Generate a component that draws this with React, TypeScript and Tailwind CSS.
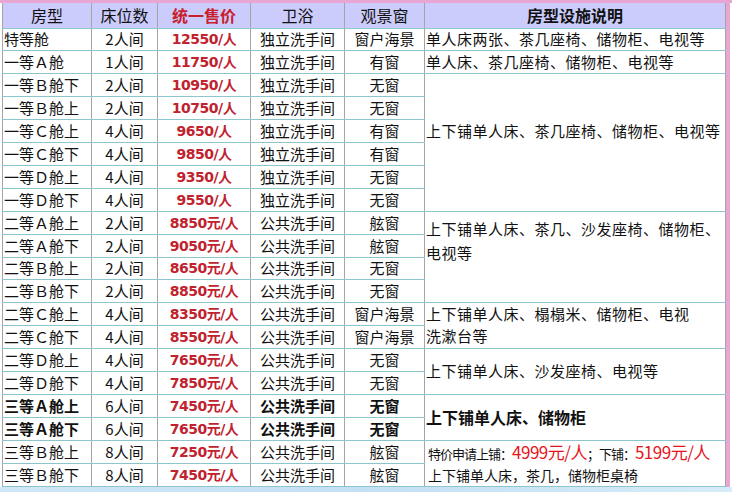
const rows: [string, string, string, string, string, boolean?][] = [
  ['特等舱', '2人间', '12550/人', '独立洗手间', '窗户海景'],
  ['一等Ａ舱', '1人间', '11750/人', '独立洗手间', '有窗'],
  ['一等Ｂ舱下', '2人间', '10950/人', '独立洗手间', '无窗'],
  ['一等Ｂ舱上', '2人间', '10750/人', '独立洗手间', '无窗'],
  ['一等Ｃ舱上', '4人间', '9650/人', '独立洗手间', '有窗'],
  ['一等Ｃ舱下', '4人间', '9850/人', '独立洗手间', '有窗'],
  ['一等Ｄ舱上', '4人间', '9350/人', '独立洗手间', '无窗'],
  ['一等Ｄ舱下', '4人间', '9550/人', '独立洗手间', '无窗'],
  ['二等Ａ舱上', '2人间', '8850元/人', '公共洗手间', '舷窗'],
  ['二等Ａ舱下', '2人间', '9050元/人', '公共洗手间', '舷窗'],
  ['二等Ｂ舱上', '2人间', '8650元/人', '公共洗手间', '无窗'],
  ['二等Ｂ舱下', '2人间', '8850元/人', '公共洗手间', '无窗'],
  ['二等Ｃ舱上', '4人间', '8350元/人', '公共洗手间', '窗户海景'],
  ['二等Ｃ舱下', '4人间', '8550元/人', '公共洗手间', '窗户海景'],
  ['二等Ｄ舱上', '4人间', '7650元/人', '公共洗手间', '无窗'],
  ['二等Ｄ舱下', '4人间', '7850元/人', '公共洗手间', '无窗'],
  ['三等Ａ舱上', '6人间', '7450元/人', '公共洗手间', '无窗', true],
  ['三等Ａ舱下', '6人间', '7650元/人', '公共洗手间', '无窗', true],
  ['三等Ｂ舱上', '8人间', '7250元/人', '公共洗手间', '舷窗'],
  ['三等Ｂ舱下', '8人间', '7450元/人', '公共洗手间', '舷窗'],
];

const cell = 'p-0 border-r border-b border-r-[#a4a4a4] border-b-[#8cc6cc] whitespace-nowrap';
const desc = 'p-0 pl-[1px] border-r border-b border-r-[#a4a4a4] border-b-[#8cc6cc] text-left tracking-[0.5px] leading-[20px]';

const Description = ({ i }: { i: number }) => {
  switch (i) {
    case 0:
      return <td className={desc}>单人床两张、茶几座椅、储物柜、电视等</td>;
    case 1:
      return <td className={desc}>单人床、茶几座椅、储物柜、电视等</td>;
    case 2:
      return (
        <td rowSpan={6} className={`${desc} align-top pt-[47px]`}>
          上下铺单人床、茶几座椅、储物柜、电视等
        </td>
      );
    case 8:
      return (
        <td rowSpan={4} className={`${desc} align-top pt-[5px] leading-[24px]`}>
          上下铺单人床、茶几、沙发座椅、储物柜、
          <br />
          电视等
        </td>
      );
    case 12:
      return (
        <td rowSpan={2} className={`${desc} leading-[22px]`}>
          上下铺单人床、榻榻米、储物柜、电视
          <br />
          洗漱台等
        </td>
      );
    case 14:
      return <td rowSpan={2} className={desc}>上下铺单人床、沙发座椅、电视等</td>;
    case 16:
      return (
        <td rowSpan={2} className={`${desc} font-bold text-[16px] tracking-normal`}>
          上下铺单人床、储物柜
        </td>
      );
    case 18:
      return (
        <td rowSpan={2} className={`${desc} tracking-normal leading-[20px] pl-[3px]`}>
          <div className="text-[13px] tracking-[-1px] leading-[22px]">
            特价申请上铺：
            <span className="text-[17px] text-[#e8141c] tracking-[-0.5px]">4999元/人</span>
            ；下铺：
            <span className="text-[17px] text-[#e8141c] tracking-[-0.5px]">5199元/人</span>
          </div>
          <div className="text-[14px]">上下铺单人床，茶几，储物柜桌椅</div>
        </td>
      );
    default:
      return null;
  }
};

export default function App() {
  return (
    <div className="w-[732px] h-[492px] overflow-hidden bg-white flex flex-col border-t-[3px] border-t-[#e8a6d2] font-['Noto_Sans_CJK_SC',sans-serif] text-[15px] text-[#111]">
      <div className="flex pl-[2px]">
        <table className="table-fixed border-collapse w-[724px] border-l border-l-[#a4a4a4]">
          <colgroup>
            <col className="w-[89px]" />
            <col className="w-[66px]" />
            <col className="w-[93px]" />
            <col className="w-[94px]" />
            <col className="w-[80px]" />
            <col />
          </colgroup>
          <thead>
            <tr className="h-[25px] bg-[#ccccfc] text-[16px] leading-[20px]">
              <th className={`${cell} font-normal`}>房型</th>
              <th className={`${cell} font-normal`}>床位数</th>
              <th className={`${cell} font-bold text-[#c8202c]`}>统一售价</th>
              <th className={`${cell} font-normal`}>卫浴</th>
              <th className={`${cell} font-normal`}>观景窗</th>
              <th className={`${cell} font-bold`}>房型设施说明</th>
            </tr>
          </thead>
          <tbody>
            {rows.map(([type, beds, price, bath, view, bold], i) => (
              <tr key={i} className={`${i === 0 || i === 10 ? 'h-[22px]' : 'h-[23px]'} leading-[20px]`}>
                <td className={`${cell} text-left pl-[1px] ${bold ? 'font-bold' : ''}`}>{type}</td>
                <td className={`${cell} text-center`}>{beds}</td>
                <td className={`${cell} text-center font-bold text-[#c0222e] text-[14px] font-['DejaVu_Sans','Noto_Sans_CJK_SC',sans-serif] tracking-[-0.5px]`}>
                  {price}
                </td>
                <td className={`${cell} text-center ${bold ? 'font-bold' : ''}`}>{bath}</td>
                <td className={`${cell} text-center ${bold ? 'font-bold' : ''}`}>{view}</td>
                <Description i={i} />
              </tr>
            ))}
          </tbody>
        </table>
        <div className="w-[4px] bg-[#e8a6d2]" />
      </div>
      <div className="flex-1 bg-gradient-to-r from-[#cfe7f6] via-[#c4e0f4] to-[#d6ecf8]" />
    </div>
  );
}
